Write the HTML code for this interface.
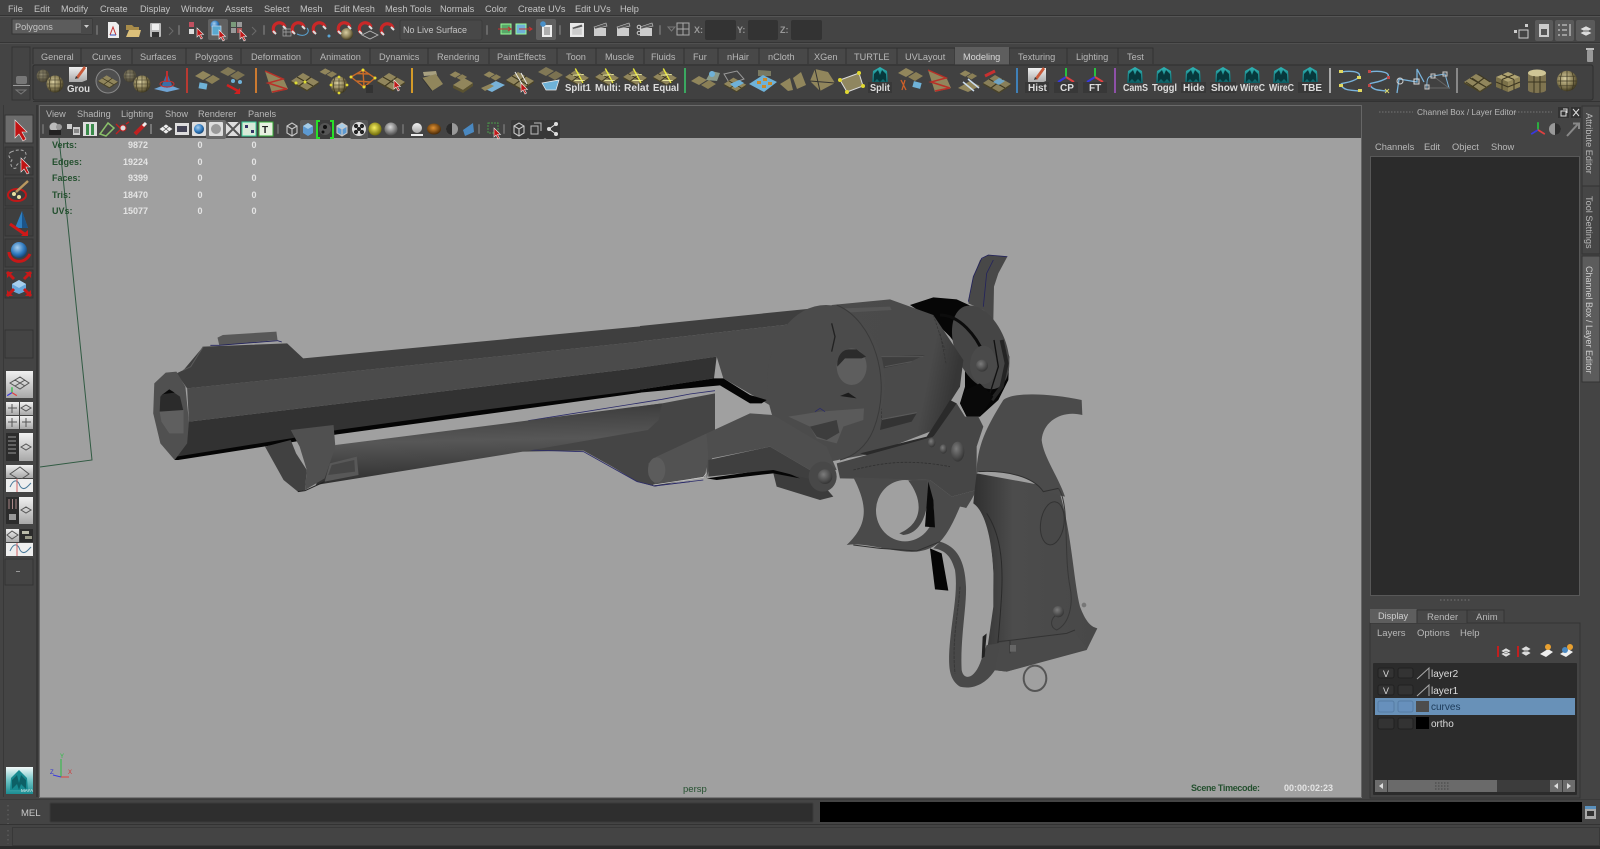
<!DOCTYPE html>
<html><head><meta charset="utf-8"><title>Maya</title>
<style>
html,body{margin:0;padding:0;background:#444;width:1600px;height:849px;overflow:hidden}
svg{display:block;position:absolute;left:0;top:0}
text{font-family:"Liberation Sans",sans-serif;font-size:9.2px;fill:#c4c4c4}
.b{font-weight:bold;font-size:10px;fill:#ddd}
.g{font-weight:bold;font-size:9px;fill:#24502f}
.w{font-weight:bold;font-size:9px;fill:#e4e4e4}
.t{fill:#b8b8b8;font-size:9.2px}
</style></head><body>
<svg width="1600" height="849" viewBox="0 0 1600 849" xmlns="http://www.w3.org/2000/svg">
<defs>
<radialGradient id="gs" cx=".42" cy=".38" r=".65"><stop offset="0" stop-color="#d9cfa2"/><stop offset=".6" stop-color="#8a7f56"/><stop offset="1" stop-color="#39331c"/></radialGradient>
<radialGradient id="gb" cx=".4" cy=".35" r=".7"><stop offset="0" stop-color="#a8d0f0"/><stop offset=".6" stop-color="#2f79bd"/><stop offset="1" stop-color="#123a66"/></radialGradient>
<radialGradient id="gy" cx=".45" cy=".4" r=".6"><stop offset="0" stop-color="#f8f060"/><stop offset="1" stop-color="#6e6a08"/></radialGradient>
<radialGradient id="gg" cx=".45" cy=".35" r=".65"><stop offset="0" stop-color="#d8d8d8"/><stop offset="1" stop-color="#4c4c4c"/></radialGradient>
<radialGradient id="go" cx=".45" cy=".4" r=".6"><stop offset="0" stop-color="#e09030"/><stop offset="1" stop-color="#4a2a08"/></radialGradient>
<radialGradient id="gp" cx=".4" cy=".35" r=".65"><stop offset="0" stop-color="#7c7c7c"/><stop offset="1" stop-color="#363636"/></radialGradient>
<linearGradient id="gt" x1="0" y1="0" x2="0" y2="1"><stop offset="0" stop-color="#2fb8b8"/><stop offset="1" stop-color="#0b5a60"/></linearGradient>
<linearGradient id="glogo" x1="0" y1="0" x2="0" y2="1"><stop offset="0" stop-color="#f4fafa"/><stop offset=".5" stop-color="#6fc4c6"/><stop offset="1" stop-color="#1b8d92"/></linearGradient>
<linearGradient id="gtube" x1=".46" y1="0" x2=".54" y2="1"><stop offset="0" stop-color="#3a3a3a"/><stop offset=".45" stop-color="#575757"/><stop offset="1" stop-color="#2c2c2c"/></linearGradient>
<linearGradient id="gcyl" x1="0" y1="0" x2="1" y2=".25"><stop offset="0" stop-color="#4b4b4b"/><stop offset=".8" stop-color="#4a4a4a"/><stop offset="1" stop-color="#363636"/></linearGradient>
<linearGradient id="ggrip" x1="0" y1="0" x2="1" y2="0"><stop offset="0" stop-color="#303030"/><stop offset=".32" stop-color="#4c4c4c"/><stop offset="1" stop-color="#484848"/></linearGradient>
<linearGradient id="gl" x1="0" y1="0" x2="0" y2="1"><stop offset="0" stop-color="#f0f0f0"/><stop offset="1" stop-color="#a8a8a8"/></linearGradient>

<g id="sph"><circle r="8.5" fill="url(#gs)"/><path d="M-8,0H8M-7,-4H7M-7,4H7M0,-8.500V8.500M-4,-7.500C-6,-3 -6,3 -4,7.500M4,-7.500C6,-3 6,3 4,7.500" stroke="#3a3420" stroke-width=".6" fill="none"/></g>
<g id="sph2"><use href="#sph" transform="translate(-12,-8) scale(.75)" opacity=".55"/><use href="#sph"/></g>
<g id="tile"><polygon points="-14,0 -2,-8 14,1 2,9" fill="#91865c"/><path d="M-8,-4 8,5M-6,5 6,-4" stroke="#3e3820" stroke-width="1.100"/><polygon points="-14,0 2,9 14,1 14,2.500 2,10.500 -14,1.500" fill="#4a4326"/></g>
<g id="tile2"><polygon points="-12,-3 -4,-8 4,-4 -4,1" fill="#91865c"/><polygon points="-2,1 6,-4 13,0 5,5" fill="#8a7f56"/></g>
<g id="tiley"><use href="#tile"/><path d="M-2,-10 7,7" stroke="#e8e83c" stroke-width="1.600"/><path d="M-5,-2 8,-3M-3,4 9,4" stroke="#f0f0a0" stroke-width="1"/></g>
<g id="teal"><polygon points="0,-9 7,-5 8,7 -8,7 -7,-5" fill="url(#gt)"/><path d="M-6,6V-2L-2,-6 0,-1 2,-6 6,-2V6L3,3 0,6 -3,3Z" fill="#07383c"/></g>
<g id="mag"><path d="M-5,5 A6,6 0 1 1 5,-1" fill="none" stroke="#c82828" stroke-width="3.200"/><path d="M-7,3 -4,6M3,-2 6,1" stroke="#ddd" stroke-width="2"/></g>
<g id="note"><polygon points="-9,-8 9,-8 9,5 4,7 -9,7" fill="url(#gl)"/><path d="M-2,2 6,-9 8,-7 0,4Z" fill="#c85a3a"/><path d="M-3,4 -2,1 0,3Z" fill="#333"/></g>
<g id="axis"><path d="M0,-8V1" stroke="#28c040" stroke-width="2"/><path d="M0,1 -8,6" stroke="#3838e0" stroke-width="2"/><path d="M0,1 8,6" stroke="#e04040" stroke-width="2"/></g>
<g id="cam"><circle cx="-2" cy="-2" r="4.500" fill="#bbb"/><circle cx="3" cy="-2" r="3" fill="#999"/><rect x="-7" y="1" width="12" height="5" fill="#222"/></g>
<g id="clap"><polygon points="-6,-2 6,-2 6,6 -6,6" fill="#ccc"/><polygon points="-6,-3 6,-7 7,-4 -5,-1" fill="#555" stroke="#ccc" stroke-width=".6"/></g>
<g id="cube"><path d="M-5,-3 0,-6 5,-3 5,4 0,7 -5,4Z M-5,-3 0,0 5,-3M0,0V7" fill="none" stroke="#c8c8c8" stroke-width="1.100"/></g>
<g id="cubeb"><path d="M-5,-3 0,-6 5,-3 5,4 0,7 -5,4Z" fill="#5d9ad2"/><path d="M-5,-3 0,0 5,-3 0,-6Z" fill="#a6cde8"/></g>
<g id="chk"><circle r="7" fill="#ddd"/><circle cx="-3" cy="-3" r="2.100" fill="#222"/><circle cx="3" cy="-3" r="2.100" fill="#222"/><circle cx="-3" cy="3" r="2.100" fill="#222"/><circle cx="3" cy="3" r="2.100" fill="#222"/><circle r="2" fill="#222"/></g>
<g id="cur"><path d="M0,0V9L2,7 4,11 5.500,10 3.500,6.500H6.500Z" fill="#c01818" stroke="#eee" stroke-width=".6"/></g>
<g id="sb"><rect x="-1" y="-5" width="2" height="10" rx="1" fill="#777" opacity=".7"/></g>
<g id="tri"><path d="M-2,-4 2,0 -2,4" fill="none" stroke="#6a6a6a"/></g>
</defs>

<!-- base -->
<rect width="1600" height="849" fill="#444"/>
<rect y="15" width="1600" height="1" fill="#333"/>
<rect y="16" width="1600" height="1" fill="#555"/>
<rect y="42" width="1600" height="1" fill="#353535"/>
<rect y="43" width="1600" height="1" fill="#505050"/>

<!-- menu bar -->
<g>
<text x="8" y="12">File</text><text x="34" y="12">Edit</text><text x="61" y="12">Modify</text><text x="100" y="12">Create</text><text x="140" y="12">Display</text><text x="181" y="12">Window</text><text x="225" y="12">Assets</text><text x="264" y="12">Select</text><text x="300" y="12">Mesh</text><text x="334" y="12">Edit Mesh</text><text x="385" y="12">Mesh Tools</text><text x="440" y="12">Normals</text><text x="485" y="12">Color</text><text x="518" y="12">Create UVs</text><text x="575" y="12">Edit UVs</text><text x="620" y="12">Help</text>
</g>

<!-- status line -->
<rect x="12" y="19" width="80" height="15" fill="#5c5c5c" stroke="#333"/>
<rect x="81" y="19" width="11" height="15" fill="#4a4a4a"/>
<path d="M84,25 89,25 86.500,28Z" fill="#ccc"/>
<text x="15" y="30">Polygons</text>
<use href="#sb" x="97" y="30"/>
<g transform="translate(113,30)"><polygon points="-5,-8 3,-8 6,-5 6,8 -5,8" fill="#eee"/><path d="M-3,5 0,-3 3,5" fill="none" stroke="#c03030"/><path d="M-3,5H3" stroke="#3050c0"/></g>
<g transform="translate(133,31)"><path d="M-7,-6H-1L1,-4H6V-1H-7Z" fill="#a88c4a"/><path d="M-7,6 -4,-1H8L6,6Z" fill="#dcc07a"/></g>
<g transform="translate(156,30)"><rect x="-6" y="-7" width="11" height="14" rx="1" fill="#bbb"/><rect x="-4" y="-6" width="7" height="6" fill="#eee"/><rect x="-4" y="2" width="7" height="5" fill="#333"/></g>
<use href="#tri" x="171" y="31"/><use href="#sb" x="179" y="30"/>
<g transform="translate(196,29)"><rect x="-7" y="-7" width="5" height="5" fill="#c05060"/><rect x="-7" y="0" width="5" height="5" fill="#ddd"/><use href="#cur" x="1" y="-1"/></g>
<rect x="208" y="19" width="20" height="21" rx="2" fill="#606060"/>
<g transform="translate(217,29)"><circle cx="-2" cy="-4" r="4.500" fill="url(#gb)"/><rect x="-5" y="-3" width="9" height="9" fill="#5aa8d0" stroke="#cde" stroke-width=".7"/><use href="#cur" x="2" y="1"/></g>
<g transform="translate(238,29)"><rect x="-7" y="-7" width="5" height="5" fill="#7a9a7a"/><rect x="-1" y="-7" width="5" height="5" fill="#999"/><rect x="-7" y="-1" width="5" height="5" fill="#999"/><rect x="-1" y="-1" width="5" height="5" fill="#aa5555"/><use href="#cur" x="2" y="1"/></g>
<use href="#tri" x="254" y="31"/><use href="#sb" x="264" y="30"/>
<use href="#mag" x="280" y="28"/><path d="M283,29h8v7h-8zM286,29v7M283,32h8" fill="none" stroke="#aaa" stroke-width=".7"/>
<use href="#mag" x="299" y="28"/><path d="M297,34C305,38 311,32 307,28" fill="none" stroke="#5ba6d6"/>
<use href="#mag" x="320" y="28"/><circle cx="329" cy="36" r="1.500" fill="#5ba6d6"/>
<circle cx="347" cy="34" r="6" fill="url(#gs)"/><use href="#mag" x="345" y="28"/>
<use href="#mag" x="366" y="28"/><path d="M362,35 370,31 378,35 370,39Z" fill="none" stroke="#bbb" stroke-width=".8"/>
<use href="#mag" x="388" y="29"/>
<rect x="400" y="20" width="82" height="20" rx="2" fill="#484848" stroke="#3c3c3c"/>
<text x="403" y="33" style="font-size:9px">No Live Surface</text>
<use href="#sb" x="487" y="30"/>
<g transform="translate(506,29)"><rect x="-5" y="-5" width="10" height="10" fill="#58a868" stroke="#9f9"/><path d="M-8,0H4M2,-2 5,0 2,2" stroke="#c83030" fill="none"/></g>
<g transform="translate(523,29)"><rect x="-7" y="-5" width="10" height="10" fill="#70b0d8" stroke="#9f9"/><path d="M-4,0H8M6,-2 9,0 6,2" stroke="#c83030" fill="none"/></g>
<rect x="536" y="19" width="20" height="21" rx="2" fill="#606060"/>
<g transform="translate(546,30)"><rect x="-4" y="-5" width="10" height="12" fill="#eee"/><path d="M-2,-2H4M-2,0H4M-2,2H4M-2,4H4" stroke="#444" stroke-width=".8"/><circle cx="-3" cy="-6" r="2.800" fill="#4a90c8"/></g>
<use href="#sb" x="560" y="30"/>
<g transform="translate(577,30)"><rect x="-7" y="-7" width="14" height="14" fill="#e8e8e8"/><use href="#clap" transform="scale(.8)"/></g>
<use href="#clap" x="600" y="30"/><use href="#clap" x="623" y="30"/><use href="#clap" x="646" y="30"/><circle cx="639" cy="27" r="1.800" fill="none" stroke="#ccc"/><circle cx="639" cy="33" r="1.800" fill="none" stroke="#ccc"/>
<use href="#sb" x="660" y="30"/>
<path d="M668,27h7l-3.500,4z" fill="none" stroke="#777"/>
<rect x="677" y="23" width="12" height="12" fill="none" stroke="#aaa"/><path d="M683,23v12M677,29h12" stroke="#aaa"/>
<text x="694" y="33" class="w" style="fill:#999">X:</text><rect x="705" y="20" width="31" height="20" rx="2" fill="#333"/>
<text x="737" y="33" class="w" style="fill:#999">Y:</text><rect x="748" y="20" width="30" height="20" rx="2" fill="#333"/>
<text x="780" y="33" class="w" style="fill:#999">Z:</text><rect x="791" y="20" width="31" height="20" rx="2" fill="#333"/>
<!-- right status -->
<g transform="translate(1522,31)" fill="#ccc"><rect x="-8" y="-1" width="3" height="3"/><rect x="-3" y="-1" width="9" height="8" fill="none" stroke="#ccc"/><rect x="3" y="-7" width="3" height="3"/></g>
<rect x="1535" y="20" width="18" height="21" rx="2" fill="#5a5a5a"/><rect x="1539" y="24" width="10" height="13" fill="#ccc"/><rect x="1541" y="29" width="6" height="6" fill="#555"/>
<rect x="1555" y="20" width="19" height="21" rx="2" fill="#5a5a5a"/><path d="M1558,25h2M1558,30h2M1558,35h2M1562,25h5M1562,30h5M1562,35h5M1570,24v12" stroke="#ddd"/>
<rect x="1576" y="20" width="19" height="21" rx="2" fill="#5a5a5a"/><path d="M1580,33 1586,30 1592,33 1586,36ZM1580,29 1586,26 1592,29 1586,32Z" fill="#ddd" stroke="#555" stroke-width=".5"/>

<!-- shelf control -->
<rect x="12" y="47" width="18" height="53" fill="#444" stroke="#333"/>
<rect x="16" y="76" width="11" height="8" rx="2" fill="#777"/>
<rect x="13" y="85" width="17" height="1" fill="#999"/>
<path d="M16,90h10l-5,4z" fill="none" stroke="#777"/>

<!-- shelf tabs -->
<path d="M33,64V49H955V64" fill="#484848"/>
<path d="M33,64V48H1153V64M81,48V64M132,48V64M186,48V64M241,48V64M311,48V64M370,48V64M428,48V64M489,48V64M557,48V64M596,48V64M644,48V64M684,48V64M718,48V64M759,48V64M808,48V64M846,48V64M897,48V64M955,48V64M1009,48V64M1067,48V64M1118,48V64" stroke="#323232" fill="none"/>
<path d="M955,65V47H1009V65Z" fill="#5e5e5e"/>
<g>
<text x="41" y="60" class="t">General</text><text x="92" y="60" class="t">Curves</text><text x="140" y="60" class="t">Surfaces</text><text x="195" y="60" class="t">Polygons</text><text x="251" y="60" class="t">Deformation</text><text x="320" y="60" class="t">Animation</text><text x="379" y="60" class="t">Dynamics</text><text x="437" y="60" class="t">Rendering</text><text x="497" y="60" class="t">PaintEffects</text><text x="566" y="60" class="t">Toon</text><text x="605" y="60" class="t">Muscle</text><text x="651" y="60" class="t">Fluids</text><text x="693" y="60" class="t">Fur</text><text x="727" y="60" class="t">nHair</text><text x="768" y="60" class="t">nCloth</text><text x="814" y="60" class="t">XGen</text><text x="854" y="60" class="t">TURTLE</text><text x="905" y="60" class="t">UVLayout</text><text x="963" y="60" style="fill:#d8d8d8">Modeling</text><text x="1018" y="60" class="t">Texturing</text><text x="1076" y="60" class="t">Lighting</text><text x="1127" y="60" class="t">Test</text>
</g>
<g transform="translate(1590,55)"><rect x="-3" y="-5" width="6" height="12" rx="1" fill="#999"/><rect x="-4" y="-7" width="8" height="2" fill="#bbb"/></g>

<!-- shelf body -->
<rect x="33" y="65" width="1560" height="35" rx="2" fill="#414141" stroke="#2e2e2e"/>
<rect x="33" y="101" width="1567" height="1" fill="#333"/>

<!-- shelf icons -->
<use href="#sph2" x="55" y="84"/>
<use href="#note" x="78" y="75"/><text x="67" y="92" class="b" textLength="23" lengthAdjust="spacingAndGlyphs">Grou</text>
<circle cx="108" cy="81" r="12" fill="#4f4f4f" stroke="#888"/><use href="#tile" transform="translate(108,81) scale(.7)"/>
<use href="#sph2" x="142" y="84"/>
<g transform="translate(167,82)"><polygon points="-13,7 0,2 13,7 0,10" fill="#6fa4d4"/><polygon points="-5,3 0,-9 5,3 0,6" fill="#3a6ea8"/><path d="M0,-11V0" stroke="#c03030" stroke-width="2"/><ellipse cy="2" rx="7" ry="3" fill="none" stroke="#c03030"/></g>
<rect x="186" y="68" width="2" height="25" fill="#b83a32"/>
<use href="#tile2" x="207" y="79"/><rect x="199" y="83" width="8" height="6" transform="rotate(10 203 86)" fill="#6fb2d8"/>
<use href="#tile2" x="232" y="75" opacity=".8"/><circle cx="233" cy="81" r="2" fill="#6fb2d8"/><circle cx="240" cy="82" r="2" fill="#6fb2d8"/><path d="M227,85 240,92" stroke="#d02020" stroke-width="2.500"/><path d="M240,88v6h-6z" fill="#d02020"/>
<rect x="255" y="68" width="2" height="25" fill="#cc7a30"/>
<g transform="translate(275,82)"><polygon points="-10,-11 9,-2 13,7 -3,11" fill="#91865c"/><path d="M-10,-11 8,-3 -7,1 12,7-3,10" fill="none" stroke="#b83028" stroke-width="1.500"/></g>
<use href="#tile" x="305" y="81"/><circle cx="305" cy="82" r="1.500" fill="#dd3"/><circle cx="296" cy="83" r="1.500" fill="#dd3"/>
<use href="#sph" x="339" y="85"/><use href="#tile2" transform="translate(328,74) scale(.7)"/><g fill="#e0d830"><circle cx="331" cy="85" r="1.400"/><circle cx="347" cy="85" r="1.400"/><circle cx="339" cy="77" r="1.400"/><circle cx="339" cy="93" r="1.400"/></g>
<g transform="translate(363,80)"><path d="M-12,-3 0,-10 12,-2 1,7ZM-6,-6.500 6,-6M-7,1 7,2M0,-10 1,7" fill="none" stroke="#c86a28" stroke-width="1.400"/><g fill="#e8d830"><circle cx="-12" cy="-3" r="1.500"/><circle cy="-10" r="1.500"/><circle cx="12" cy="-2" r="1.500"/><circle cx="1" cy="7" r="1.500"/></g><rect x="3" y="5" width="7" height="8" fill="#333"/></g>
<use href="#tile" x="391" y="81"/><use href="#cur" x="394" y="80"/>
<rect x="411" y="68" width="2" height="25" fill="#d49a28"/>
<g transform="translate(432,81)"><polygon points="-9,-9 4,-10 5,-6 -8,-5" fill="#a8a080"/><polygon points="-10,-3 4,-7 11,3 0,10" fill="#91865c"/><path d="M-10,-3 0,10" stroke="#333"/></g>
<g transform="translate(462,81)"><use href="#tile2" transform="translate(-4,-4) scale(.7)"/><polygon points="-9,4 2,-3 11,2 1,9" fill="#91865c"/><polygon points="-9,4 1,9 11,2 11,5 1,12 -9,7" fill="#5a5230"/></g>
<use href="#tile2" transform="translate(492,77) scale(.7)"/><polygon points="483,88 496,81 505,85 492,92" fill="#78b2d8"/><polygon points="481,88 490,84 494,86 485,91" fill="#91865c"/>
<use href="#tile" x="520" y="80"/><path d="M515,72 522,84M521,73 527,84" stroke="#eee"/><use href="#cur" x="521" y="83"/>
<use href="#tile2" x="550" y="75" opacity=".8"/><polygon points="542,83 559,80 556,90 546,90" fill="#6fb2d8" stroke="#eee" stroke-width=".7"/>
<use href="#tiley" transform="translate(577,77) scale(.85)"/><text x="565" y="91" class="b" textLength="26" lengthAdjust="spacingAndGlyphs">Split1</text>
<use href="#tiley" transform="translate(607,77) scale(.85)"/><text x="595" y="91" class="b" textLength="26" lengthAdjust="spacingAndGlyphs">Multi:</text>
<use href="#tiley" transform="translate(635,77) scale(.85)"/><text x="624" y="91" class="b" textLength="25" lengthAdjust="spacingAndGlyphs">Relat</text>
<use href="#tiley" transform="translate(665,77) scale(.85)"/><text x="653" y="91" class="b" textLength="26" lengthAdjust="spacingAndGlyphs">Equal</text>
<rect x="684" y="68" width="2" height="25" fill="#3aa860"/>
<use href="#tile2" x="703" y="84"/><polygon points="706,80 711,71 720,73 717,81" fill="#8a9a8a"/><circle cx="712" cy="74" r="3" fill="#6fb2d8"/>
<g transform="translate(735,81)"><polygon points="-11,-7 2,-10 9,-2 -5,3" fill="none" stroke="#999"/><use href="#tile" transform="translate(0,3) scale(.8)"/><polygon points="-5,3 4,-1 9,2 0,7" fill="#6fb2d8"/></g>
<g transform="translate(763,81)"><polygon points="-5,-11 8,-10 8,-5 -5,-5" fill="#7a7a62"/><polygon points="-14,3 0,-6 14,1 1,11" fill="#6fb2d8"/><g fill="#c98a2c"><rect x="-6" y="0" width="4" height="3"/><rect x="0" y="-3" width="4" height="3"/><rect x="-1" y="4" width="4" height="3"/><rect x="5" y="1" width="4" height="3"/></g></g>
<g transform="translate(793,81)"><polygon points="-13,3 -3,-3 0,9 -5,10" fill="#91865c"/><polygon points="0,-3 8,-9 13,4 4,8" fill="#91865c"/></g>
<g transform="translate(822,80)"><polygon points="-7,-11 6,-8 13,3 -2,11 -12,1" fill="#91865c"/><path d="M-12,1 13,3M-7,-11 -2,11" stroke="#333"/></g>
<g transform="translate(852,81)"><polygon points="-12,-1 7,-8 11,5 -5,11" fill="#8f8660" stroke="#ddd"/><g fill="#e0d830"><circle cx="-12" cy="-1" r="2"/><circle cx="7" cy="-8" r="2"/><circle cx="11" cy="5" r="2"/><circle cx="-5" cy="11" r="2"/></g></g>
<use href="#teal" x="880" y="76"/><rect x="868" y="82" width="24" height="11" fill="#383838"/><text x="870" y="91" class="b" textLength="20" lengthAdjust="spacingAndGlyphs">Split</text>
<use href="#tile2" x="910" y="76"/><rect x="913" y="82" width="8" height="6" transform="rotate(15 917 85)" fill="#6fb2d8"/><path d="M905,80 902,90M901,80 906,90" stroke="#d06028" stroke-width="1.300"/>
<g transform="translate(938,81)"><polygon points="-10,-11 9,-2 13,7 -3,11" fill="#91865c"/><path d="M-10,-11 8,-3 -7,1 12,7-3,10" fill="none" stroke="#b83028" stroke-width="1.500"/></g>
<use href="#tile2" transform="translate(968,76) scale(.7)"/><polygon points="958,88 970,81 980,86 968,92" fill="#91865c"/><path d="M963,82 974,91M968,79 979,88" stroke="#cde" stroke-width="1.500"/>
<use href="#tile" x="997" y="83" opacity=".9"/><polygon points="993,82 999,78 1005,81 999,85" fill="#6fa4c4"/><path d="M985,76 995,71" stroke="#c83030" stroke-width="3"/>
<rect x="1016" y="68" width="2" height="25" fill="#3f80b8"/>
<use href="#note" x="1037" y="76"/><rect x="1025" y="82" width="24" height="11" fill="#383838"/><text x="1028" y="91" class="b">Hist</text>
<use href="#axis" x="1066" y="76"/><rect x="1054" y="82" width="24" height="11" fill="#383838"/><text x="1060" y="91" class="b">CP</text>
<use href="#axis" x="1095" y="76"/><rect x="1083" y="82" width="24" height="11" fill="#383838"/><text x="1089" y="91" class="b">FT</text>
<rect x="1114" y="68" width="2" height="25" fill="#8e50a8"/>
<use href="#teal" x="1135" y="76"/><text x="1123" y="91" class="b" textLength="25" lengthAdjust="spacingAndGlyphs">CamS</text>
<use href="#teal" x="1164" y="76"/><text x="1152" y="91" class="b" textLength="25" lengthAdjust="spacingAndGlyphs">Toggl</text>
<use href="#teal" x="1193" y="76"/><rect x="1181" y="82" width="25" height="11" fill="#383838"/><text x="1183" y="91" class="b">Hide</text>
<use href="#teal" x="1223" y="76"/><rect x="1210" y="82" width="26" height="11" fill="#383838"/><text x="1211" y="91" class="b">Show</text>
<use href="#teal" x="1252" y="76"/><text x="1240" y="91" class="b" textLength="25" lengthAdjust="spacingAndGlyphs">WireC</text>
<use href="#teal" x="1281" y="76"/><text x="1269" y="91" class="b" textLength="25" lengthAdjust="spacingAndGlyphs">WireC</text>
<use href="#teal" x="1310" y="76"/><rect x="1298" y="82" width="24" height="11" fill="#383838"/><text x="1302" y="91" class="b">TBE</text>
<rect x="1329" y="68" width="2" height="25" fill="#aaa"/>
<path d="M1341,72C1355,70 1363,73 1358,78 1350,84 1340,82 1341,85 1344,91 1352,90 1359,91" fill="none" stroke="#7ab4dc" stroke-width="1.400"/><g fill="#e0d860"><rect x="1339" y="70" width="4" height="3"/><rect x="1357" y="76" width="4" height="3"/><rect x="1339" y="84" width="4" height="3"/><rect x="1358" y="89" width="4" height="3"/></g>
<path d="M1369,72C1382,70 1392,73 1387,78 1377,84 1369,82 1370,85 1373,91 1381,90 1386,91" fill="none" stroke="#7ab4dc" stroke-width="1.400"/><g fill="#c04848"><rect x="1368" y="70" width="3" height="3"/><rect x="1387" y="76" width="3" height="3"/><rect x="1368" y="84" width="3" height="3"/></g><path d="M1385,89l4,4M1389,89l-4,4" stroke="#d8d870"/>
<path d="M1397,93 1399,79 1417,82 1417,69 1424,82" fill="none" stroke="#7ab4dc" stroke-width="1.300"/><circle cx="1400" cy="81" r="3" fill="none" stroke="#ccc"/><rect x="1414" y="79" width="5" height="5" fill="none" stroke="#ddd"/>
<path d="M1427,88C1426,76 1430,76 1433,76L1445,74 1449,88Z" fill="none" stroke="#7ab4dc"/><path d="M1427,88H1449M1433,76 1449,88" stroke="#666"/><g fill="none" stroke="#ccc"><rect x="1425" y="85" width="4" height="4"/><rect x="1431" y="74" width="4" height="4"/><rect x="1443" y="72" width="4" height="4"/></g>
<rect x="1456" y="68" width="2" height="25" fill="#888"/>
<use href="#tile" x="1478" y="82"/><path d="M1472,78 1484,86M1478,74 1490,82M1466,82 1478,90" stroke="#3e3820" fill="none"/>
<g transform="translate(1508,81)"><polygon points="-12,-4 0,-9 12,-4 0,1" fill="#b0a472"/><polygon points="-12,-4 0,1 0,11 -12,6" fill="#7a7048"/><polygon points="12,-4 0,1 0,11 12,6" fill="#928658"/><path d="M-6,-1V9M6,-1V9M-12,1 0,6 12,1M-6,-6.500 6,-1.500M6,-6.500 -6,-1.500" stroke="#3a3420" fill="none"/></g>
<g transform="translate(1537,81)"><rect x="-9" y="-8" width="18" height="17" fill="#7f7450"/><ellipse cy="-8" rx="9" ry="3.500" fill="#cfc596"/><ellipse cy="9" rx="9" ry="3" fill="#7f7450"/><path d="M-3,-5V12M3,-5V12M-9,1H9" stroke="#3a3420"/></g>
<use href="#sph" transform="translate(1567,81) scale(1.200)"/>

<!-- viewport panel -->
<rect x="39" y="105" width="1323" height="33" fill="#444"/>
<rect x="39" y="105" width="1323" height="1" fill="#6a6a6a"/>
<rect x="39" y="105" width="1" height="692" fill="#666"/>
<rect x="1361" y="105" width="1" height="692" fill="#666"/>
<rect x="40" y="138" width="1321" height="659" fill="#a0a0a0"/>
<rect x="39" y="797" width="1323" height="1" fill="#777"/>
<text x="46" y="117" class="t">View</text><text x="77" y="117" class="t">Shading</text><text x="121" y="117" class="t">Lighting</text><text x="165" y="117" class="t">Show</text><text x="198" y="117" class="t">Renderer</text><text x="248" y="117" class="t">Panels</text>

<!-- panel icons -->
<g transform="translate(0,129)">
<use href="#sb" x="43"/>
<use href="#cam" x="56"/><g transform="translate(73,0)"><rect x="-6" y="-5" width="5" height="5" fill="#ccc"/><rect x="0" y="-2" width="7" height="8" fill="#ccc"/><path d="M1,1H6M1,3H6" stroke="#444"/></g>
<rect x="83" y="-7" width="14" height="14" fill="#ddd"/><rect x="86" y="-5" width="3" height="11" fill="#3a8a4a"/><rect x="91" y="-5" width="3" height="11" fill="#3a8a4a"/>
<path d="M100,5 108,-6 114,-1 106,7Z" fill="none" stroke="#8ac06a" stroke-width="1.500"/>
<path d="M119,3 129,-6" stroke="#c02020" stroke-width="0"/>
<circle cx="123" cy="-1" r="3" fill="#ddd" stroke="#c02020"/><path d="M116,-5 120,-1M116,5 120,1M126,-5 129,-7" stroke="#c02020" stroke-width="1.400"/>
<path d="M135,5 145,-5" stroke="#c02020" stroke-width="4"/><path d="M146,-6 143,-3" stroke="#eee" stroke-width="3"/>
<path d="M151,-5V5" stroke="#777" stroke-width="2"/>
<g transform="translate(166,0)"><path d="M-7,0 0,-5 7,0 0,5ZM-3,-2.500 3,2.500M3,-2.500 -3,2.500" fill="#eee" stroke="#444" stroke-width=".7"/></g>
<rect x="175" y="-6" width="14" height="12" fill="#ddd"/><rect x="177" y="-3" width="10" height="6" fill="#445"/>
<rect x="192" y="-7" width="14" height="14" rx="1" fill="#ddd"/><circle cx="199" r="5" fill="url(#gb)"/>
<rect x="206" y="-9" width="20" height="19" rx="2" fill="#6a6a6a"/><rect x="209" y="-7" width="14" height="14" rx="1" fill="#ddd"/><circle cx="216" r="5" fill="#999"/>
<rect x="226" y="-7" width="14" height="14" fill="#ddd"/><path d="M226,-7 240,7M240,-7 226,7" stroke="#555" stroke-width="2"/>
<rect x="242" y="-7" width="14" height="14" fill="#d8ead8" stroke="#3c9"/><rect x="245" y="-4" width="3" height="3" fill="#336"/><rect x="251" y="1" width="3" height="3" fill="#336"/>
<rect x="259" y="-7" width="14" height="14" fill="#e8f0e0" stroke="#3a3"/><text x="262" y="4" style="font-size:10px;font-weight:bold;fill:#222">T</text>
<use href="#sb" x="278"/>
<use href="#cube" x="292"/>
<rect x="300" y="-9" width="18" height="19" rx="2" fill="#5a5a5a"/><use href="#cubeb" x="308"/>
<rect x="317" y="-9" width="16" height="19" fill="#3c3c3c"/><path d="M320,-8h-3V9h3M330,-8h3V9h-3" fill="none" stroke="#28e028" stroke-width="2"/><circle cx="325" r="6" fill="#555"/><circle cx="325" cy="-2" r="2" fill="#111"/><circle cx="323" cy="3" r="1.500" fill="#111"/>
<use href="#cubeb" x="342"/><use href="#cube" x="342"/>
<rect x="350" y="-9" width="18" height="19" rx="2" fill="#555"/><use href="#chk" x="359"/>
<circle cx="375" r="6.500" fill="url(#gy)"/><circle cx="391" r="6.500" fill="url(#gg)"/>
<use href="#sb" x="403"/>
<circle cx="417" cy="-1" r="5" fill="url(#gl)"/><path d="M411,6h12" stroke="#eee" stroke-width="2"/>
<ellipse cx="434" rx="7" ry="5.500" fill="url(#go)"/>
<circle cx="452" r="6" fill="#999"/><path d="M452,-6A6,6 0 0 0 452,6Z" fill="#2a2a2a"/>
<path d="M463,1 473,-6 474,3 465,7Z" fill="#4a88c0"/>
<use href="#sb" x="479"/>
<rect x="488" y="-6" width="10" height="10" fill="none" stroke="#4a9a4a" stroke-dasharray="2 1"/><use href="#cur" x="494" y="-1"/>
<use href="#sb" x="504"/>
<rect x="511" y="-9" width="17" height="19" rx="2" fill="#383838"/><use href="#cube" x="519"/>
<rect x="528" y="-9" width="17" height="19" rx="2" fill="#383838"/><path d="M531,-3h7v8h-7zM534,-6h7v8" fill="none" stroke="#bbb"/>
<rect x="545" y="-9" width="15" height="19" rx="2" fill="#383838"/><path d="M556,-5 549,0 556,5" fill="none" stroke="#ddd"/><g fill="#ddd"><circle cx="556" cy="-5" r="2"/><circle cx="549" r="2"/><circle cx="556" cy="5" r="2"/></g>
</g>

<!-- green camera line -->
<path d="M59,138 92,460 40,467" fill="none" stroke="#305a42" stroke-width="1"/>

<!-- HUD -->
<g>
<text x="52" y="148" class="g">Verts:</text><text x="52" y="165" class="g">Edges:</text><text x="52" y="181" class="g">Faces:</text><text x="52" y="198" class="g">Tris:</text><text x="52" y="214" class="g">UVs:</text>
<text x="148" y="148" class="w" text-anchor="end">9872</text><text x="148" y="165" class="w" text-anchor="end">19224</text><text x="148" y="181" class="w" text-anchor="end">9399</text><text x="148" y="198" class="w" text-anchor="end">18470</text><text x="148" y="214" class="w" text-anchor="end">15077</text>
<text x="200" y="148" class="w" text-anchor="middle">0</text><text x="200" y="165" class="w" text-anchor="middle">0</text><text x="200" y="181" class="w" text-anchor="middle">0</text><text x="200" y="198" class="w" text-anchor="middle">0</text><text x="200" y="214" class="w" text-anchor="middle">0</text>
<text x="254" y="148" class="w" text-anchor="middle">0</text><text x="254" y="165" class="w" text-anchor="middle">0</text><text x="254" y="181" class="w" text-anchor="middle">0</text><text x="254" y="198" class="w" text-anchor="middle">0</text><text x="254" y="214" class="w" text-anchor="middle">0</text>
</g>

<!-- REVOLVER front (zoom-5 coordinates) -->
<g transform="translate(130,240) scale(.35714,.33333)">
<polygon points="1100,635 1270,632 1350,680 1420,725 1470,740 1600,710 1638,640 1638,460 1490,490 1110,545" fill="#454545"/>
<path d="M1115,630 1270,635 1420,725 1470,738 1568,725" fill="none" stroke="#2a2a6a" stroke-width="2.500"/>
<path d="M1115,542 1490,478 1568,462 1638,452" fill="none" stroke="#2a2a6a" stroke-width="2.500"/>
<polygon points="575,615 1090,545 1490,490 1480,540 1450,570 1100,635 520,735" fill="url(#gtube)"/>
<polygon points="560,670 635,650 640,705 545,725" fill="#585858"/><polygon points="565,675 628,660 630,695 555,705" fill="#464646"/>
<polygon points="125,660 135,660 450,607 580,583 1000,522 1430,458 1430,430 125,600" fill="#050505"/>
<polygon points="165,545 1430,383 1430,450 1000,508 580,570 450,595 130,650" fill="#323232"/>
<polygon points="160,445 1430,305 1430,383 165,545" fill="#4b4b4b"/>
<polygon points="130,400 150,390 205,320 440,310 485,355 1430,259 1430,305 160,445" fill="#3f3f3f"/>
<path d="M205,320 170,380 150,390" fill="none" stroke="#5a5a5a" stroke-width="3"/>
<polygon points="245,293 260,285 410,275 413,300 250,316" fill="#585858"/>
<path d="M225,316 250,316 413,302 425,306" fill="none" stroke="#20205a" stroke-width="2.500"/>
<polygon points="68,430 100,398 130,395 155,440 165,545 160,610 125,660 85,610 65,520" fill="#505050"/>
<polygon points="85,470 110,448 140,470 150,515 83,515" fill="#2b2b2b"/><polygon points="85,468 110,448 125,458 95,462" fill="#0a0a0a"/>
<polygon points="83,515 150,510 150,580 110,580 88,545" fill="#5f5f5f"/>
<polygon points="378,620 450,600 465,640 495,690 490,750 470,755 430,720" fill="#414141"/>
<polygon points="450,570 570,555 575,620 545,715 490,750 495,690 475,620" fill="#505050"/>
<path d="M470,755 490,752 545,725" fill="none" stroke="#222" stroke-width="3"/>
</g>

<!-- REVOLVER rear (zoom-6 coordinates) -->
<g transform="translate(640,240) scale(.33333)">
<!-- hammer -->
<polygon points="985,190 1000,110 1020,60 1045,45 1102,50 1075,100 1062,140 1060,240 1030,210" fill="#484848"/>
<path d="M985,185 1000,110 1025,55 1045,45 1102,50M1060,60 1040,100 1030,200" fill="none" stroke="#23235c" stroke-width="2.500"/>
<!-- rear rings -->
<polygon points="810,195 880,172 950,178 1030,215 1080,270 1108,350 1105,420 1075,480 1020,530 980,530 960,490 975,440 975,350 930,290 880,240" fill="#060606"/>
<ellipse cx="1022" cy="322" rx="76" ry="132" transform="rotate(-22 1022 322)" fill="#454545"/>
<path d="M900,225 C960,225 1010,290 1030,340" fill="none" stroke="#0c0c0c" stroke-width="9"/>
<path d="M1085,300 1100,370 1085,440 1055,480" fill="none" stroke="#242424" stroke-width="12"/>
<path d="M1062,300 1075,380 1050,460" fill="none" stroke="#111" stroke-width="4"/>
<polygon points="975,450 1020,430 1060,470 1020,530 980,530 960,490" fill="#090909"/>
<!-- cylinder -->
<polygon points="575,195 750,178 880,225 930,300 970,360 960,440 915,510 870,575 700,640 590,660" fill="url(#gcyl)"/>
<polygon points="660,640 860,590 905,520 930,480 950,490 910,560 870,600 700,650" fill="#2a2a2a"/>
<polygon points="720,350 855,345 800,370 730,385" fill="#3e3e3e"/>
<path d="M720,350H850M735,380 815,365" stroke="#565656" stroke-width="3"/>
<polygon points="725,540 830,520 815,545 720,570" fill="#333"/>
<path d="M725,538 830,518" stroke="#5a5a5a" stroke-width="3"/>
<path d="M880,225 915,330 M900,280 918,370M725,370V540" fill="none" stroke="#333" stroke-width="2" stroke-dasharray="8 4"/>
<polygon points="610,205 750,200 755,210 620,218" fill="#565656"/>
<!-- frame / barrel junction -->
<polygon points="0,258 490,208 575,200 565,240 0,304" fill="#3f3f3f"/>
<polygon points="0,304 565,240 600,500 430,520 380,490 250,415 230,350 0,383" fill="#4b4b4b"/>
<polygon points="0,383 230,350 222,415 0,449" fill="#323232"/>
<polygon points="0,449 222,415 250,415 330,465 380,480 365,490 330,490 240,436 0,458" fill="#050505"/>
<!-- disc -->
<ellipse cx="558" cy="430" rx="177" ry="235" fill="#4b4b4b"/>
<path d="M590,195 C700,240 760,420 700,570 680,620 640,650 600,660" fill="none" stroke="#3a3a3a" stroke-width="3"/>
<path d="M575,250 585,290 575,335" fill="none" stroke="#222" stroke-width="4"/>
<ellipse cx="635" cy="380" rx="45" ry="55" fill="#5e5e5e"/>
<path d="M592,380C590,350 605,330 625,328H650L678,350 665,355 615,355Z" fill="#2b2b2b"/>
<path d="M600,468 625,458 650,475Z" fill="#1c1c1c"/>
<polygon points="445,530 540,515 672,505 670,540 610,560 590,610 530,595 510,560" fill="#5a5a5a"/>
<polygon points="510,560 590,540 598,578 560,600 530,590" fill="#3d3d3d"/>
<path d="M525,515 540,505 555,515" fill="none" stroke="#2a2a6a" stroke-width="2.500"/>
<!-- lever -->
<polygon points="400,700 510,690 580,770 540,780 410,740" fill="#3c3c3c"/>
<polygon points="200,715 410,685 480,715 400,700 230,720" fill="#060606"/>
<polygon points="200,580 330,520 400,525 560,620 590,690 510,690 390,620 215,655 200,715" fill="#4e4e4e"/>
<polygon points="50,650 200,580 205,650 195,710 45,732 25,705 25,670" fill="#525252"/>
<polygon points="205,660 390,620 510,690 520,720 400,690 205,710" fill="#3f3f3f"/>
<path d="M40,735 190,712 200,698" fill="none" stroke="#cfcfcf" stroke-width="2"/>
<path d="M40,738 190,720" fill="none" stroke="#2a2a6a" stroke-width="2.500"/>
<ellipse cx="50" cy="690" rx="26" ry="38" fill="#5c5c5c"/>
<!-- guard & frame -->
<polygon points="590,670 880,590 950,490 975,530 1015,530 1030,560 1010,620 1010,750 935,770 870,720 600,715" fill="#464646"/>
<path d="M640,690 C720,670 800,655 930,680" fill="none" stroke="#303030" stroke-width="2.500" stroke-dasharray="8 4"/>
<ellipse cx="875" cy="608" rx="11" ry="14" fill="url(#gp)"/><ellipse cx="910" cy="627" rx="11" ry="14" fill="url(#gp)"/><ellipse cx="953" cy="635" rx="20" ry="30" fill="url(#gp)"/>
<ellipse cx="548" cy="710" rx="42" ry="45" fill="#484848"/><circle cx="555" cy="710" r="22" fill="url(#gp)"/>
<path d="M640,712 C680,790 690,850 620,915 C680,905 760,940 830,935 C880,930 905,905 940,860 C960,830 985,800 1010,750 L935,770 L870,720 Z" fill="#4a4a4a"/>
<path d="M640,915 720,925 830,933 900,905" fill="none" stroke="#303030" stroke-width="3"/>
<!-- grip -->
<path d="M1010,700 L1255,745 C1295,870 1300,1020 1320,1100 C1335,1140 1350,1160 1372,1165 L1340,1230 L1100,1295 L1060,1290 L1030,1310 L1060,1100 L1060,1000 C1055,880 1030,810 1000,790 L1005,740 Z" fill="url(#ggrip)"/>
<path d="M1010,700 C1010,620 1040,560 1090,480 C1120,455 1230,460 1325,480 L1327,525 C1270,510 1210,540 1205,600 C1210,650 1255,710 1275,770 L1210,755 C1180,710 1100,690 1015,695 Z" fill="#4b4b4b"/>
<path d="M1015,695 C1100,690 1180,710 1210,755 L1255,745" fill="none" stroke="#303030" stroke-width="3"/>
<path d="M1040,820 C1080,880 1090,960 1085,1060 C1080,1150 1075,1190 1070,1250" fill="none" stroke="#2a2a2a" stroke-width="3"/>
<ellipse cx="1237" cy="850" rx="35" ry="65" transform="rotate(8 1237 850)" fill="#484848" stroke="#333" stroke-width="3"/>
<path d="M1255,745 C1290,790 1270,940 1290,1040 C1300,1090 1290,1150 1250,1170 1225,1160 1235,1130 1250,1125" fill="none" stroke="#383838" stroke-width="3"/>
<circle cx="1255" cy="1115" r="17" fill="url(#gp)"/><circle cx="1332" cy="1095" r="7" fill="#777"/>
<polygon points="1070,1210 1300,1170 1340,1225 1100,1295 1060,1290" fill="#4a4a4a"/>
<path d="M1075,1205 1120,1200 1280,1180 1305,1170M1110,1200V1240" fill="none" stroke="#333" stroke-width="3"/>
<rect x="1110" y="1215" width="18" height="20" fill="#666"/>
<ellipse cx="1185" cy="1315" rx="34" ry="38" fill="none" stroke="#555" stroke-width="6"/>
<!-- holes (background colour) -->
<ellipse cx="795" cy="812" rx="87" ry="92" fill="#a0a0a0"/>
<path d="M960,800 C1030,810 1055,880 1060,1000 C1060,1100 1050,1180 1020,1260 C1000,1310 975,1320 968,1290 C960,1200 980,1100 978,1040 C975,960 950,920 900,905 C925,880 945,835 960,800 Z" fill="#a0a0a0"/>
<polygon points="885,740 920,760 915,800 895,850" fill="#4a4a4a"/>
<path d="M805,722 C850,780 850,850 778,880 L790,885 C850,880 872,800 860,722 Z" fill="#464646"/>
<polygon points="855,860 865,725 880,780 885,862" fill="#0a0a0a"/>
<polygon points="870,925 905,940 925,1052 885,1048" fill="#050505"/>
<!-- strap -->
<path d="M900,905 C950,920 975,960 978,1040 C980,1100 960,1200 965,1290 C970,1320 1000,1320 1020,1270 L1040,1215 L1080,1210 L1065,1290 C1040,1330 1000,1350 960,1340 C930,1320 925,1290 928,1230 C935,1130 955,1060 945,990 C935,955 920,930 880,925 Z" fill="#494949"/>
<path d="M960,1040 C955,1120 935,1200 945,1300" fill="none" stroke="#383838" stroke-width="3" stroke-dasharray="10 3"/>
<polygon points="1028,1190 1040,1180 1034,1250 1025,1255" fill="#222"/>
<!-- rear pin -->
<ellipse cx="1030" cy="375" rx="40" ry="58" fill="#4a4a4a"/><circle cx="1026" cy="377" r="18" fill="url(#gp)"/>
</g>

<!-- axis gizmo -->
<path d="M61,777V759" stroke="#28c040"/><path d="M61,777H69" stroke="#e04040"/><path d="M61,777 53,775" stroke="#3838e0"/>
<text x="60" y="758" style="font-size:6px;fill:#28c040">Y</text><text x="68" y="774" style="font-size:6px;fill:#d03030">X</text><text x="50" y="774" style="font-size:6px;fill:#3030d0">Z</text>
<text x="683" y="792" style="font-size:9.500px;fill:#24502f">persp</text>
<text x="1191" y="791" class="g" textLength="69">Scene Timecode:</text>
<text x="1333" y="791" class="w" text-anchor="end">00:00:02:23</text>

<!-- left toolbox -->
<rect x="5" y="115" width="28" height="28" fill="#6c6c6c" stroke="#333"/>
<path d="M15,120V138L19,134 23,141 26,139 22,132H27Z" fill="#c01414" stroke="#eee" stroke-width=".6"/>
<rect x="5" y="147" width="28" height="28" fill="#3f3f3f" stroke="#333"/>
<path d="M11,152C20,148 27,150 26,156 22,164 16,162 16,168 12,170 9,163 12,160 7,156 9,153 11,152Z" fill="none" stroke="#aaa" stroke-dasharray="3 2"/>
<path d="M21,158V172L24,169 27,174 29,173 26,167H30Z" fill="#c01414" stroke="#eee" stroke-width=".6"/>
<rect x="5" y="178" width="28" height="28" fill="#3f3f3f" stroke="#333"/>
<ellipse cx="17" cy="195" rx="9" ry="6" fill="#3a3a3a" stroke="#c01818" stroke-width="2"/><path d="M16,192 28,181" stroke="#b89860" stroke-width="2.500"/><circle cx="14" cy="194" r="2" fill="#e8e0a0"/><circle cx="19" cy="197" r="2" fill="#e8e0a0"/>
<rect x="5" y="208" width="28" height="28" fill="#3f3f3f" stroke="#333"/>
<polygon points="22,211 15,228 28,228" fill="#2f7fc0"/><polygon points="22,211 22,228 28,228" fill="#1c5488"/><path d="M10,224 26,235" stroke="#d01818" stroke-width="3"/><path d="M28,230v6h-7z" fill="#d01818"/>
<rect x="5" y="239" width="28" height="28" fill="#3f3f3f" stroke="#333"/>
<circle cx="19" cy="250" r="8" fill="url(#gb)"/><path d="M9,252C9,262 24,266 30,254" fill="none" stroke="#c81818" stroke-width="3"/>
<rect x="5" y="270" width="28" height="28" fill="#3f3f3f" stroke="#333"/>
<polygon points="19,280 26,284 26,291 19,294 12,291 12,284" fill="#68a8dc"/><polygon points="19,280 26,284 19,288 12,284" fill="#a8d0ee"/>
<path d="M7,272 14,279M31,272 24,279M7,296 14,289M31,296 24,289" stroke="#c81818" stroke-width="3"/><path d="M7,272h6l-6,6zM31,272h-6l6,6zM7,296h6l-6-6zM31,296h-6l6-6z" fill="#c81818"/>
<rect x="5" y="330" width="28" height="28" fill="#444" stroke="#333"/>
<!-- layouts -->
<rect x="6" y="371" width="27" height="27" fill="url(#gl)"/><path d="M10,383 20,377 29,383 20,389ZM15,380 25,386M25,380 15,386" fill="none" stroke="#555"/><use href="#axis" transform="translate(12,392) scale(.6)"/>
<g fill="url(#gl)"><rect x="6" y="402" width="13" height="13"/><rect x="20" y="402" width="13" height="13"/><rect x="6" y="416" width="13" height="13"/><rect x="20" y="416" width="13" height="13"/></g><path d="M12,404V413M8,408H17M12,418V427M8,422H17M26,418V427M22,422H31" stroke="#555"/><path d="M21,408 26,405 31,408 26,411Z" fill="none" stroke="#555"/>
<rect x="6" y="433" width="13" height="28" fill="#2c2c2c"/><path d="M8,437H16M8,441H16M8,445H16M8,449H16M8,453H16" stroke="#999"/><rect x="19" y="433" width="14" height="28" fill="url(#gl)"/><path d="M21,447 26,444 31,447 26,450Z" fill="none" stroke="#555"/>
<rect x="6" y="465" width="27" height="13" fill="url(#gl)"/><path d="M10,474 20,467 29,474 20,480Z" fill="none" stroke="#555"/>
<rect x="6" y="479" width="27" height="13" fill="#eee"/><path d="M10,487C14,478 18,480 20,486 24,492 28,486 31,483" fill="none" stroke="#4a7a9a"/><path d="M17,479V492" stroke="#d06060"/>
<rect x="6" y="497" width="13" height="27" fill="#2c2c2c"/><path d="M9,499v10M12.500,499v10M16,499v10" stroke="#a88"/><rect x="9" y="514" width="7" height="6" fill="#999"/><rect x="19" y="497" width="14" height="27" fill="url(#gl)"/><path d="M21,510 26,507 31,510 26,513Z" fill="none" stroke="#555"/>
<rect x="6" y="529" width="13" height="13" fill="url(#gl)"/><path d="M7,535 12,531 18,535 12,539Z" fill="none" stroke="#555"/>
<rect x="20" y="529" width="13" height="13" fill="#2c2c2c"/><rect x="22" y="531" width="7" height="3" fill="#bba"/><rect x="25" y="536" width="7" height="3" fill="#998"/>
<rect x="6" y="543" width="27" height="13" fill="#eee"/><path d="M10,551C14,542 18,544 20,550 24,556 28,550 31,547" fill="none" stroke="#4a7a9a"/><path d="M17,543V556" stroke="#d06060"/>
<rect x="5" y="559" width="28" height="26" fill="#444" stroke="#333"/><rect x="16" y="571" width="4" height="1" fill="#999"/>
<rect x="36" y="105" width="2" height="692" fill="#363636"/>
<rect x="3" y="105" width="1" height="692" fill="#383838"/>
<!-- logo -->
<rect x="6" y="767" width="27" height="27" fill="url(#glogo)"/>
<polygon points="19,770 27,778 28,790 10,790 11,778" fill="#168a90"/><path d="M12,789V780L17,775 19,783 21,775 26,780V789L21,784 19,790 17,784Z" fill="#0c6066"/>
<text x="21" y="792" style="font-size:4.500px;fill:#e8f0f0">MAYA</text>

<!-- right panel -->
<path d="M1379,112h34M1512,112h40" stroke="#5c5c5c" stroke-dasharray="1.500 1.500" stroke-width="2"/>
<text x="1417" y="115" style="font-size:8.300px;fill:#b8b8b8">Channel Box / Layer Editor</text>
<rect x="1558" y="107" width="11" height="11" fill="#333"/><path d="M1561,111h5v5h-5zM1563,109h4v4" fill="none" stroke="#ddd"/>
<rect x="1571" y="107" width="10" height="11" fill="#333"/><path d="M1573,109 1579,116M1579,109 1573,116" stroke="#ddd"/>
<use href="#axis" transform="translate(1538,129) scale(.85)"/>
<circle cx="1555" cy="129" r="6" fill="#999"/><path d="M1555,123A6,6 0 0 1 1555,135Z" fill="#2e2e2e"/>
<path d="M1567,136 1578,124M1573,123.500H1579V129" fill="none" stroke="#888" stroke-width="2"/>
<text x="1375" y="150" class="t" style="font-size:9.300px">Channels</text><text x="1424" y="150" class="t" style="font-size:9.300px">Edit</text><text x="1452" y="150" class="t" style="font-size:9.300px">Object</text><text x="1491" y="150" class="t" style="font-size:9.300px">Show</text>
<rect x="1370.500" y="156.500" width="209" height="439" fill="#2b2b2b" stroke="#585858"/>
<path d="M1440,600h30" stroke="#5c5c5c" stroke-width="2" stroke-dasharray="1.500 2"/>

<!-- vertical tabs -->
<rect x="1582" y="106" width="18" height="80" fill="#4a4a4a" stroke="#333"/>
<rect x="1582" y="186" width="18" height="68" fill="#464646" stroke="#333"/>
<rect x="1582" y="256" width="18" height="126" fill="#5c5c5c" stroke="#333"/>
<text transform="translate(1586,113) rotate(90)" class="t">Attribute Editor</text>
<text transform="translate(1586,196) rotate(90)" class="t">Tool Settings</text>
<text transform="translate(1586,266) rotate(90)" style="font-size:9px;fill:#cfcfcf">Channel Box / Layer Editor</text>

<!-- layer editor -->
<rect x="1370" y="623" width="210" height="175" fill="#444" stroke="#333"/>
<path d="M1370,623V609H1417V623Z" fill="#5e5e5e"/>
<path d="M1417,623V610H1467V623M1467,610H1504V623" fill="#484848" stroke="#333"/>
<text x="1378" y="619" style="font-size:9.200px;fill:#cfcfcf">Display</text><text x="1427" y="620" class="t" style="font-size:9.500px">Render</text><text x="1476" y="620" class="t" style="font-size:9.500px">Anim</text>
<text x="1377" y="636" class="t" style="font-size:9.500px">Layers</text><text x="1417" y="636" class="t" style="font-size:9.500px">Options</text><text x="1460" y="636" class="t" style="font-size:9.500px">Help</text>
<g transform="translate(0,651)">
<path d="M1498,-5V6" stroke="#c02020" stroke-width="2"/><path d="M1501,0 1506,-3 1511,0 1506,3ZM1501,3 1506,0 1511,3 1506,6Z" fill="#ddd" stroke="#444" stroke-width=".5"/>
<path d="M1518,-5V6" stroke="#c02020" stroke-width="2"/><path d="M1521,-2 1526,-5 1531,-2 1526,1ZM1521,2 1526,-1 1531,2 1526,5Z" fill="#ddd" stroke="#444" stroke-width=".5"/>
<path d="M1540,3 1548,-2 1553,1 1546,6Z" fill="#eee"/><circle cx="1548" cy="-4" r="3" fill="#e8a030"/>
<path d="M1560,3 1568,-2 1573,1 1566,6Z" fill="#eee"/><circle cx="1565" cy="-1" r="3" fill="#4a88c0"/><circle cx="1570" cy="-4" r="3" fill="#e8a030"/>
</g>
<rect x="1373" y="663" width="204" height="132" rx="1" fill="#2b2b2b"/>
<rect x="1375" y="698" width="200" height="17" fill="#6891b8"/>
<g>
<rect x="1378" y="668" width="16" height="10" rx="2" fill="#333" stroke="#222"/><text x="1383" y="677" style="font-size:9px;fill:#ddd">V</text>
<rect x="1398" y="668" width="15" height="10" rx="2" fill="#333" stroke="#222"/>
<path d="M1417,679 1429,668V679" fill="none" stroke="#aaa"/><text x="1431" y="677" style="font-size:10px;fill:#ddd">layer2</text>
<rect x="1378" y="685" width="16" height="10" rx="2" fill="#333" stroke="#222"/><text x="1383" y="694" style="font-size:9px;fill:#ddd">V</text>
<rect x="1398" y="685" width="15" height="10" rx="2" fill="#333" stroke="#222"/>
<path d="M1417,696 1429,685V696" fill="none" stroke="#aaa"/><text x="1431" y="694" style="font-size:10px;fill:#ddd">layer1</text>
<rect x="1378" y="701" width="16" height="11" rx="2" fill="#6790bc" stroke="#567ca4"/>
<rect x="1398" y="701" width="15" height="11" rx="2" fill="#6790bc" stroke="#567ca4"/>
<rect x="1416" y="701" width="13" height="11" fill="#4d4d4d"/><text x="1431" y="710" style="font-size:10px;fill:#1c3a58">curves</text>
<rect x="1378" y="718" width="16" height="11" rx="2" fill="#333" stroke="#222"/>
<rect x="1398" y="718" width="15" height="11" rx="2" fill="#333" stroke="#222"/>
<rect x="1416" y="717" width="13" height="12" fill="#000"/><text x="1431" y="727" style="font-size:10px;fill:#ddd">ortho</text>
</g>
<rect x="1375" y="780" width="200" height="12" fill="#3c3c3c"/>
<rect x="1375" y="780" width="12" height="12" fill="#6c6c6c"/><path d="M1383,783 1379,786 1383,789Z" fill="#ddd"/>
<rect x="1388" y="780" width="109" height="12" fill="#6a6a6a"/><path d="M1435,783h15M1435,786h15M1435,789h15" stroke="#444" stroke-dasharray="1.500 1.500"/>
<rect x="1550" y="780" width="12" height="12" fill="#6c6c6c"/><path d="M1558,783 1554,786 1558,789Z" fill="#ddd"/>
<rect x="1563" y="780" width="12" height="12" fill="#6c6c6c"/><path d="M1567,783 1571,786 1567,789Z" fill="#ddd"/>

<!-- command line -->
<rect x="0" y="799" width="1600" height="1" fill="#3a3a3a"/>
<path d="M8,805v20" stroke="#666" stroke-dasharray="1.500 3"/>
<text x="21" y="816" style="font-size:9.500px;fill:#c8c8c8">MEL</text>
<rect x="50" y="803" width="763" height="19" rx="1" fill="#2e2e2e" stroke="#3a3a3a"/>
<rect x="820" y="802" width="762" height="20" fill="#000"/>
<rect x="1585" y="806" width="11" height="13" fill="#aaa"/><rect x="1585" y="806" width="11" height="3" fill="#5a90bc"/><rect x="1587" y="811" width="7" height="5" fill="#333"/>
<rect x="0" y="824" width="1600" height="1" fill="#333"/>
<path d="M8,830v14" stroke="#666" stroke-dasharray="1.500 3"/>
<rect x="12.500" y="827.500" width="1587" height="18" fill="#444" stroke="#383838"/>
<rect x="0" y="846" width="1600" height="3" fill="#2a2a2a"/>
</svg>
</body></html>
